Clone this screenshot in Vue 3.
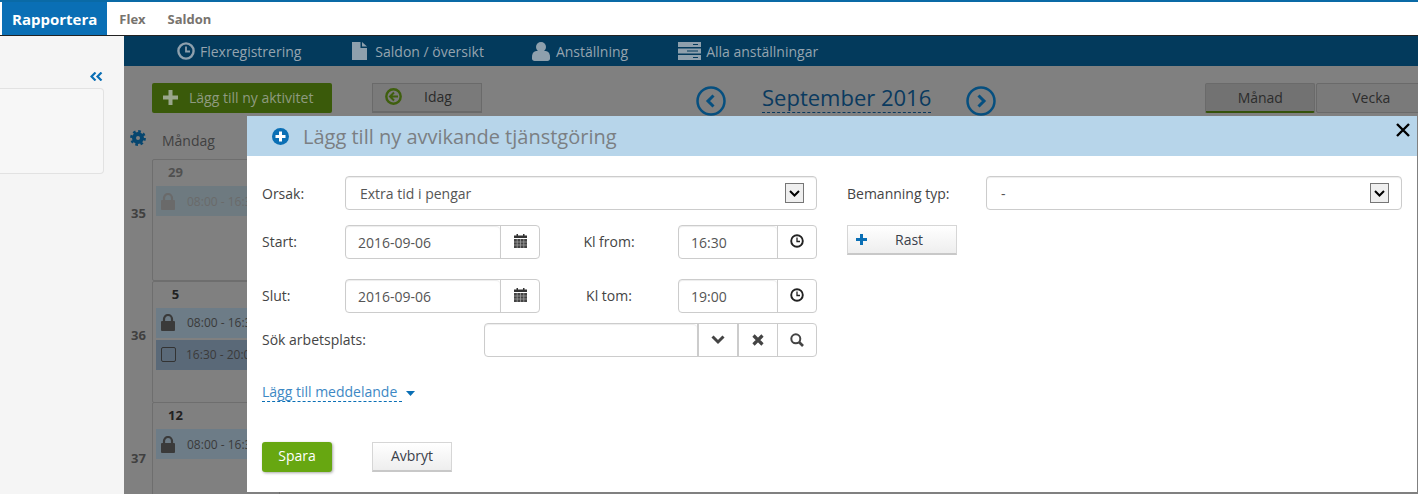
<script setup>
const subnav = [
  { label: 'Flexregistrering', icon: 'clock' },
  { label: 'Saldon / översikt', icon: 'file' },
  { label: 'Anställning', icon: 'user' },
  { label: 'Alla anställningar', icon: 'server' }
]

const weeks = [
  { nr: 35, day: 29, muted: true, events: [{ time: '08:00 - 16:30', lock: true }] },
  { nr: 36, day: 5, events: [{ time: '08:00 - 16:30', lock: true }, { time: '16:30 - 20:00', lock: false }] },
  { nr: 37, day: 12, events: [{ time: '08:00 - 16:30', lock: true }] }
]
</script>

<template>
  <div class="page">
    <header class="topbar">
      <a class="tab active">Rapportera</a>
      <a class="tab">Flex</a>
      <a class="tab">Saldon</a>
    </header>

    <div class="below">
      <aside class="sidebar">
        <div class="collapse">
          <svg width="13" height="9" viewBox="0 0 13 9" fill="none" stroke="#0a6fb5" stroke-width="2.2">
            <path d="M5.500 .5 1.500 4.500 5.500 8.500M11.500 .5 7.500 4.500 11.500 8.500" />
          </svg>
        </div>
        <div class="side-panel"></div>
      </aside>

      <main class="main">
        <nav class="subnav">
          <a v-for="item in subnav" :key="item.label" class="subnav-item" :class="item.icon">
            <svg v-if="item.icon === 'clock'" width="18" height="18" viewBox="0 0 18 18" fill="none" stroke="#8ea0ad">
              <circle cx="9" cy="9" r="7.6" stroke-width="2.4" />
              <path d="M9 4.500V9.500H13" stroke-width="1.8" />
            </svg>
            <svg v-else-if="item.icon === 'file'" width="15" height="18" viewBox="0 0 15 18" fill="#8ea0ad">
              <path d="M0 0H8.500V6H15V18H0ZM10 0 15 4.500H10Z" />
            </svg>
            <svg v-else-if="item.icon === 'user'" width="18" height="19" viewBox="0 0 18 19" fill="#8ea0ad">
              <circle cx="9" cy="5" r="5" />
              <path d="M0 15c0-4 2-6 5-6h8c3 0 5 2 5 6v1.500c0 1.500-1 2.500-2.500 2.500h-13C1 19 0 18 0 16.500Z" />
            </svg>
            <svg v-else width="23" height="18" viewBox="0 0 23 18" fill="#8ea0ad">
              <path d="M0 0H23V5H0ZM0 6.500H23V11.500H0ZM0 13H23V18H0Z" />
              <path d="M15 2.500H20M9 9H20M15 15.500H20" stroke="#033a5c" stroke-width="1" />
            </svg>
            <span>{{ item.label }}</span>
          </a>
        </nav>

        <div class="toolbar">
          <button class="add-btn">
            <svg width="15" height="15" viewBox="0 0 15 15" fill="#9aa68c"><path d="M5.500 0H9.500V5.500H15V9.500H9.500V15H5.500V9.500H0V5.500H5.500Z" /></svg>
            Lägg till ny aktivitet
          </button>
          <button class="today-btn">
            <svg width="17" height="17" viewBox="0 0 17 17" fill="none">
              <circle cx="8.500" cy="8.500" r="7.200" stroke="#3f5f0e" stroke-width="2.400" />
              <path d="M9 4.500 5 8.500 9 12.500M5.500 8.500H13" stroke="#3f5f0e" stroke-width="2" />
            </svg>
            <span>Idag</span>
          </button>
          <div class="month">
            <svg width="30" height="30" viewBox="0 0 30 30" fill="none" stroke="#064f7f">
              <circle cx="15" cy="15" r="13.500" stroke-width="2.500" />
              <path d="M17.500 9.500 12 15 17.500 20.500" stroke-width="3" />
            </svg>
            <span class="month-name">September 2016</span>
            <svg width="30" height="30" viewBox="0 0 30 30" fill="none" stroke="#064f7f">
              <circle cx="15" cy="15" r="13.500" stroke-width="2.500" />
              <path d="M12.500 9.500 18 15 12.500 20.500" stroke-width="3" />
            </svg>
          </div>
          <div class="views">
            <button class="view selected">Månad</button>
            <button class="view">Vecka</button>
          </div>
        </div>

        <div class="cal-head">
          <svg width="16" height="16" viewBox="0 0 16 16" fill="none" stroke="#06466f">
            <circle cx="8" cy="8" r="4" stroke-width="4" />
            <circle cx="8" cy="8" r="6.600" stroke-width="2.600" stroke-dasharray="2.600 2.580" />
          </svg>
          <span>Måndag</span>
        </div>

        <div class="weeks">
          <div v-for="week in weeks" :key="week.nr" class="week">
            <div class="week-nr">{{ week.nr }}</div>
            <div class="cell" :class="{ muted: week.muted }">
              <div class="day">{{ week.day }}</div>
              <div v-for="ev in week.events" :key="ev.time" class="event" :class="{ open: !ev.lock }">
                <svg v-if="ev.lock" width="14" height="17" viewBox="0 0 14 17">
                  <path d="M3 8V5a4 4 0 0 1 8 0v3" fill="none" stroke="currentColor" stroke-width="2.200" />
                  <rect y="7" width="14" height="10" rx="1" fill="currentColor" />
                </svg>
                <span v-else class="check"></span>
                <span class="time">{{ ev.time }}</span>
              </div>
            </div>
          </div>
        </div>
      </main>
    </div>

    <section class="modal">
      <div class="modal-head">
        <svg width="17" height="17" viewBox="0 0 17 17">
          <circle cx="8.500" cy="8.500" r="8.500" fill="#0a6fb5" />
          <path d="M7 3.500H10V7H13.500V10H10V13.500H7V10H3.500V7H7Z" fill="#fff" />
        </svg>
        <h2>Lägg till ny avvikande tjänstgöring</h2>
        <svg class="close" width="14" height="14" viewBox="0 0 14 14" stroke="#000" stroke-width="2.400">
          <path d="M1 1 13 13M13 1 1 13" />
        </svg>
      </div>

      <div class="modal-body">
        <div class="form-left">
          <div class="row first">
            <label>Orsak:</label>
            <div class="select">
              <span>Extra tid i pengar</span>
              <span class="arrow">
                <svg width="11" height="7" viewBox="0 0 11 7" fill="none" stroke="#000" stroke-width="2"><path d="M1 1 5.500 5.500 10 1" /></svg>
              </span>
            </div>
          </div>

          <div class="row start">
            <label>Start:</label>
            <div class="group date">
              <input value="2016-09-06" readonly />
              <span class="addon">
                <svg width="13" height="14" viewBox="0 0 13 14"><path d="M0 1.500H2.500V0H4V1.500H9V0H10.500V1.500H13V4H0Z" fill="#333" /><path d="M0 5H13V14H0Z" fill="#444" /><path d="M3.200 5V14M6.500 5V14M9.800 5V14M0 8H13M0 11H13" stroke="#aaa" stroke-width=".7" /></svg>
              </span>
            </div>
            <label class="mid">Kl from:</label>
            <div class="group time">
              <input value="16:30" readonly />
              <span class="addon">
                <svg width="14" height="14" viewBox="0 0 14 14" fill="none" stroke="#222"><circle cx="7" cy="7" r="5.800" stroke-width="1.900" /><path d="M7 3.500V7.500H10" stroke-width="1.300" /></svg>
              </span>
            </div>
          </div>

          <div class="row slut">
            <label>Slut:</label>
            <div class="group date">
              <input value="2016-09-06" readonly />
              <span class="addon">
                <svg width="13" height="14" viewBox="0 0 13 14"><path d="M0 1.500H2.500V0H4V1.500H9V0H10.500V1.500H13V4H0Z" fill="#333" /><path d="M0 5H13V14H0Z" fill="#444" /><path d="M3.200 5V14M6.500 5V14M9.800 5V14M0 8H13M0 11H13" stroke="#aaa" stroke-width=".7" /></svg>
              </span>
            </div>
            <label class="mid">Kl tom:</label>
            <div class="group time">
              <input value="19:00" readonly />
              <span class="addon">
                <svg width="14" height="14" viewBox="0 0 14 14" fill="none" stroke="#222"><circle cx="7" cy="7" r="5.800" stroke-width="1.900" /><path d="M7 3.500V7.500H10" stroke-width="1.300" /></svg>
              </span>
            </div>
          </div>

          <div class="row search">
            <label>Sök arbetsplats:</label>
            <div class="group workplace">
              <input readonly />
              <span class="addon thick">
                <svg width="14" height="10" viewBox="0 0 14 10" fill="none" stroke="#444" stroke-width="3"><path d="M1.500 1.500 7 7 12.500 1.500" /></svg>
              </span>
              <span class="addon thick">
                <svg width="12" height="12" viewBox="0 0 12 12" fill="none" stroke="#444" stroke-width="3.200"><path d="M1.500 1.500 10.500 10.500M10.500 1.500 1.500 10.500" /></svg>
              </span>
              <span class="addon">
                <svg width="14" height="14" viewBox="0 0 14 14" fill="none" stroke="#444"><circle cx="5.800" cy="5.800" r="4.500" stroke-width="2" /><path d="M9 9 13 13" stroke-width="2.600" /></svg>
              </span>
            </div>
          </div>

          <div class="message">
            <a>Lägg till meddelande</a>
            <svg width="9" height="5" viewBox="0 0 9 5" fill="#0a6fb5"><path d="M0 0H9L4.500 5Z" /></svg>
          </div>

          <div class="actions">
            <button class="save">Spara</button>
            <button class="cancel">Avbryt</button>
          </div>
        </div>

        <div class="form-right">
          <div class="row first">
            <label class="long">Bemanning typ:</label>
            <div class="select dash">
              <span>-</span>
              <span class="arrow">
                <svg width="11" height="7" viewBox="0 0 11 7" fill="none" stroke="#000" stroke-width="2"><path d="M1 1 5.500 5.500 10 1" /></svg>
              </span>
            </div>
          </div>
          <button class="rast">
            <svg width="11" height="11" viewBox="0 0 11 11" fill="#0a6fb5"><path d="M4 0H7V4H11V7H7V11H4V7H0V4H4Z" /></svg>
            <span>Rast</span>
          </button>
        </div>
      </div>
    </section>
  </div>
</template>

<style>
html, body {
  margin: 0;
  height: 100%;
  overflow: hidden;
}
</style>

<style scoped>
.page {
  position: relative;
  width: 1418px;
  height: 494px;
  overflow: hidden;
  font-family: "Open Sans", "Liberation Sans", sans-serif;
  font-size: 14px;
  color: #444;
  background: #808080;
}

button, input {
  font-family: inherit;
  font-size: 14px;
}

/* Toppmeny */
.topbar {
  display: flex;
  height: 33px;
  padding-left: 2px;
  background: #fff;
  border-top: 2px solid #0a6aa6;
}

.tab {
  display: flex;
  align-items: center;
  padding: 0 10px;
  margin-right: 2px;
  font-weight: 700;
  font-size: 13px;
  color: #77736e;
}

.tab.active {
  background: #0a6fb5;
  color: #fff;
  font-size: 15px;
}

.below {
  display: flex;
  height: 459px;
  border-top: 1px solid #222;
}

/* Sidomeny */
.sidebar {
  width: 124px;
  flex: none;
  background: #f5f5f5;
}

.collapse {
  display: flex;
  justify-content: flex-end;
  height: 16px;
  padding: 36px 21px 0 0;
  line-height: 0;
}

.side-panel {
  width: 104px;
  height: 86px;
  box-sizing: border-box;
  background: #f7f7f7;
  border: 1px solid #e2e2e2;
  border-left: 0;
  border-radius: 0 4px 4px 0;
}

/* Huvudyta */
.main {
  flex: 1;
  min-width: 0;
  background: #808080;
}

.subnav {
  display: flex;
  align-items: center;
  height: 30px;
  padding-left: 53px;
  background: #033a5c;
  color: #95a4af;
}

.subnav-item {
  display: flex;
  align-items: center;
  gap: 5px;
}

.subnav-item.clock { margin-right: 51px; }
.subnav-item.file { margin-right: 48px; gap: 8px; }
.subnav-item.user { margin-right: 50px; gap: 6px; }

.toolbar {
  display: flex;
  align-items: flex-start;
  height: 50px;
  box-sizing: border-box;
  padding: 17px 0 0 28px;
}

.toolbar button {
  flex: none;
}

.add-btn {
  display: flex;
  align-items: center;
  gap: 11px;
  width: 180px;
  height: 30px;
  padding: 0 0 2px 11px;
  border: 0;
  border-radius: 2px;
  background: #3a5a0a;
  color: #8f9a80;
  font-size: 14px;
  white-space: nowrap;
}

.today-btn {
  display: flex;
  align-items: center;
  width: 110px;
  height: 30px;
  margin-left: 40px;
  padding: 0 0 2px 12px;
  background: #7a7a7a;
  border: 1px solid #6a6a6a;
  border-bottom-width: 2px;
  color: #2a2a2a;
}

.today-btn span {
  margin-left: 22px;
}

.month {
  display: flex;
  align-items: flex-start;
  flex: none;
  margin-left: 214px;
  color: #0a3a5f;
}

.month svg {
  flex: none;
  margin-top: 3px;
}

.month-name {
  margin: 0 35px 0 36px;
  font-size: 22px;
  line-height: 28px;
  height: 29px;
  white-space: nowrap;
  border-bottom: 1px dashed #0a3a5f;
}

.views {
  display: flex;
  flex: none;
  margin-left: 209px;
}

.view {
  width: 110px;
  height: 30px;
  margin-right: 1px;
  padding-bottom: 2px;
  border: 1px solid #6a6a6a;
  border-radius: 2px;
  background: #7a7a7a;
  color: #2c2c2c;
}

.view.selected {
  background: #727272;
  border-bottom: 2px solid #35520b;
}

.cal-head {
  display: flex;
  align-items: center;
  gap: 16px;
  height: 43px;
  padding-left: 6px;
}

.cal-head span {
  margin-top: 5px;
  color: #404040;
}

.week {
  display: flex;
  height: 121.5px;
}

.week-nr {
  display: flex;
  align-items: center;
  width: 28px;
  padding: 0 0 14px 7px;
  box-sizing: border-box;
  font-weight: 700;
  font-size: 13px;
  color: #404040;
}

.week:nth-child(2) .week-nr { padding-bottom: 12px; }
.week:nth-child(3) .week-nr { padding-bottom: 10px; }

.cell {
  width: 120px;
  height: 120px;
  padding: 0 3px;
  border: 1px solid #6e6e6e;
  border-radius: 2px;
}

.day {
  height: 26px;
  line-height: 24px;
  width: 33px;
  text-align: center;
  margin-left: 3px;
  font-weight: 700;
  font-size: 13px;
  color: #222;
}

.event {
  display: flex;
  align-items: center;
  gap: 12px;
  height: 30px;
  margin-bottom: 2px;
  padding-left: 5px;
  background: #6d7c87;
  color: #3a3a3a;
  font-size: 12px;
  white-space: nowrap;
}

.event.open {
  background: #5a6978;
  gap: 10px;
}

.check {
  width: 13px;
  height: 13px;
  border: 1.500px solid #333;
  border-radius: 2px;
}

.cell.muted .day { color: #505050; }
.cell.muted .event { background: #6e7a80; color: #6a6a6a; }

/* Dialog */
.modal {
  position: absolute;
  left: 247px;
  top: 116px;
  width: 1170px;
  height: 376px;
  background: #fff;
}

.modal-head {
  position: relative;
  display: flex;
  align-items: center;
  gap: 14px;
  height: 40px;
  padding-left: 25px;
  background: #b7d5ea;
}

.modal-head h2 {
  margin: 0;
  font-size: 20px;
  font-weight: 400;
  color: #7b7f83;
}

.close {
  position: absolute;
  right: 7px;
  top: 7px;
}

.modal-body {
  display: flex;
  gap: 30px;
  padding: 20px 15px 0;
}

.form-left, .form-right {
  width: 555px;
  flex: none;
}

.row {
  display: flex;
  align-items: center;
}

.row label {
  width: 83px;
  flex: none;
  margin-top: -2px;
  color: #444;
}

.row.first label {
  margin-top: 0;
}

.row label.long {
  width: 139px;
}

.row label.mid {
  width: 138px;
  text-align: center;
}

.row.start { margin-top: 15px; }
.row.slut { margin-top: 20px; }
.row.search { margin-top: 10px; }
.row.search label { width: 222px; }

.select {
  display: flex;
  align-items: center;
  justify-content: space-between;
  flex: 1;
  height: 34px;
  box-sizing: border-box;
  padding: 0 12px 0 14px;
  border: 1px solid #ccc;
  border-radius: 4px;
  color: #555;
  box-shadow: inset 0 1px 1px rgba(0, 0, 0, 0.075);
}

.arrow {
  display: flex;
  align-items: center;
  justify-content: center;
  width: 19px;
  height: 20px;
  box-sizing: border-box;
  border: 1px solid #767676;
  background: #efefef;
}

.group {
  display: flex;
  height: 34px;
  box-sizing: border-box;
  border: 1px solid #ccc;
  border-radius: 4px;
}

.group.date { width: 195px; }
.group.time { width: 139px; }
.group.workplace { width: 333px; }

.group input {
  flex: 1;
  min-width: 0;
  padding: 0 12px;
  border: 0;
  outline: 0;
  background: transparent;
  color: #555;
  border-radius: 4px;
  box-shadow: inset 0 1px 1px rgba(0, 0, 0, 0.075);
}

.addon {
  display: flex;
  align-items: center;
  justify-content: center;
  width: 39px;
  flex: none;
  padding-bottom: 2px;
  box-sizing: border-box;
  border-left: 1px solid #ccc;
}

.addon.thick {
  width: 40px;
  border-left-width: 2px;
}

.workplace .addon {
  padding-bottom: 0;
}

.message {
  display: flex;
  align-items: center;
  gap: 7px;
  margin-top: 25px;
}

.message a {
  height: 19px;
  line-height: 19px;
  padding-right: 5px;
  color: #3d88c4;
  border-bottom: 1px dashed #0a6fb5;
}

.message svg {
  margin-top: 3px;
  margin-left: -3px;
}

.actions {
  display: flex;
  gap: 40px;
  margin-top: 40px;
}

.save {
  width: 70px;
  height: 30px;
  padding-bottom: 5px;
  border: 0;
  border-radius: 3px;
  background: #67a711;
  color: #fff;
  box-shadow: 1px 1px 3px rgba(0, 0, 0, 0.35);
}

.cancel {
  width: 80px;
  height: 30px;
  padding-bottom: 4px;
  border: 1px solid #d6d6d6;
  border-bottom: 2px solid #c8c8c8;
  background: linear-gradient(#fff, #eee);
  color: #3a3f4a;
}

.rast {
  display: flex;
  align-items: center;
  width: 110px;
  height: 30px;
  margin-top: 15px;
  padding: 0 0 0 8px;
  border: 1px solid #d6d6d6;
  border-bottom: 2px solid #c8c8c8;
  background: linear-gradient(#fff, #eee);
  color: #3a3f4a;
}

.rast span {
  margin-left: 28px;
}
</style>
